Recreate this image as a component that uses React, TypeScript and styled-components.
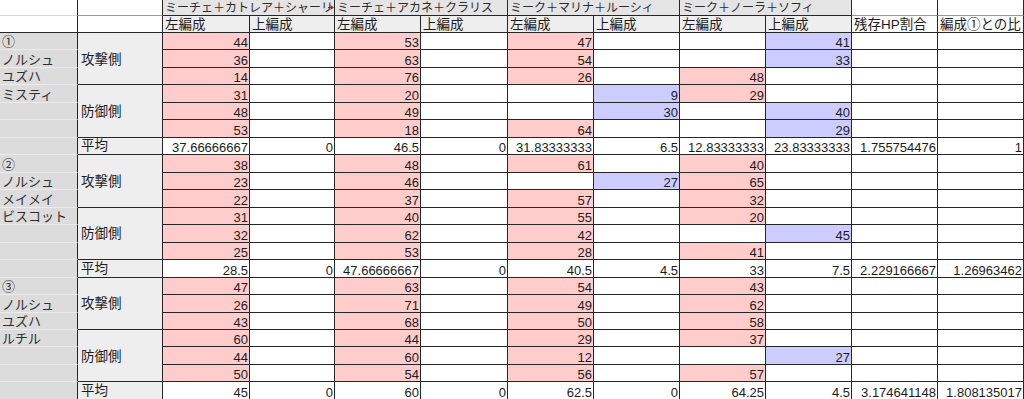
import React from 'react';
import styled, { createGlobalStyle, css } from 'styled-components';

const GlobalStyle = createGlobalStyle`
  html, body { margin: 0; padding: 0; background: #ffffff; overflow: hidden; }
  body { font-family: "Liberation Sans", "Noto Sans CJK JP", sans-serif; }
`;

const Sheet = styled.div`
  display: grid;
  grid-template-columns: 78px 85px 87px 85px 86px 87px 86px 86px 86px 86px 86px 86px;
  grid-template-rows: 16px 17px repeat(21, 17.47px);
  width: 1024px;
  height: 399px;
  overflow: hidden;
  font-family: "Liberation Sans", "Noto Sans CJK JP", sans-serif;
  color: #1c1c1c;
`;

const Cell = styled.div<{ $span?: number; $rows?: number }>`
  position: relative;
  box-sizing: border-box;
  min-width: 0;
  grid-column: span ${(p) => p.$span ?? 1};
  grid-row: span ${(p) => p.$rows ?? 1};
  border-right: 1px solid #262626;
  border-bottom: 1px solid #262626;
  display: flex;
  align-items: flex-end;
  padding: 0 2px;
  overflow: hidden;
  white-space: nowrap;
  font-size: 13px;
  line-height: 12px;
`;

const Corner = styled(Cell)<{ $top?: boolean }>`
  background: #ffffff;
  border-bottom-color: ${(p) => (p.$top ? '#d6d6d6' : '#262626')};
`;

const BlankHead = styled(Cell)<{ $top?: boolean }>`
  background: #ffffff;
  border-bottom-color: ${(p) => (p.$top ? '#9a9a9a' : '#262626')};
`;

const GroupHead = styled(Cell)`
  background: #e4e4e4;
  font-size: 12px;
  line-height: 12px;
  padding: 0 6px 1px 2px;
  color: #2a2a2a;
`;

const OverflowMark = styled.svg`
  position: absolute;
  right: 0;
  top: 5px;
  width: 6px;
  height: 5px;
`;

const SubHead = styled(Cell)<{ $plain?: boolean }>`
  background: ${(p) => (p.$plain ? '#ffffff' : '#eeeeee')};
  font-size: 13.5px;
  line-height: 13px;
  padding: 0 2px 1px 2px;
`;

const NameCell = styled(Cell)`
  background: #dcdcdc;
  border-bottom-color: #ececec;
  color: #2e2e2e;
  font-size: 13px;
  line-height: 13px;
  padding: 0 2px 1px 2px;
`;

const SideCell = styled(Cell)<{ $avg?: boolean }>`
  background: #eeeeee;
  font-size: 13.5px;
  line-height: 14px;
  padding: 0 3px 1px 3px;
  ${(p) =>
    p.$avg
      ? css`
          align-items: flex-end;
        `
      : css`
          align-items: center;
          padding-top: 3px;
        `}
`;

type Tone = 'p' | 'b' | 'w';

const toneBg: Record<Tone, string> = {
  p: '#ffcccc',
  b: '#ccccff',
  w: '#ffffff',
};

const NumCell = styled(Cell)<{ $tone: Tone }>`
  background: ${(p) => toneBg[p.$tone]};
  justify-content: flex-end;
  padding: 0 1px 0 2px;
`;

type Group = {
  names: string[];
  rows: string[][];
  avg: string[];
};

const groups: Group[] = [
  {
    names: ['①', 'ノルシュ', 'ユズハ', 'ミスティ', '', '', ''],
    rows: [
      ['44p', '', '53p', '', '47p', '', '', '41b'],
      ['36p', '', '63p', '', '54p', '', '', '33b'],
      ['14p', '', '76p', '', '26p', '', '48p', ''],
      ['31p', '', '20p', '', '', '9b', '29p', ''],
      ['48p', '', '49p', '', '', '30b', '', '40b'],
      ['53p', '', '18p', '', '64p', '', '', '29b'],
    ],
    avg: ['37.66666667', '0', '46.5', '0', '31.83333333', '6.5', '12.83333333', '23.83333333', '1.755754476', '1'],
  },
  {
    names: ['②', 'ノルシュ', 'メイメイ', 'ビスコット', '', '', ''],
    rows: [
      ['38p', '', '48p', '', '61p', '', '40p', ''],
      ['23p', '', '46p', '', '', '27b', '65p', ''],
      ['22p', '', '37p', '', '57p', '', '32p', ''],
      ['31p', '', '40p', '', '55p', '', '20p', ''],
      ['32p', '', '62p', '', '42p', '', '', '45b'],
      ['25p', '', '53p', '', '28p', '', '41p', ''],
    ],
    avg: ['28.5', '0', '47.66666667', '0', '40.5', '4.5', '33', '7.5', '2.229166667', '1.26963462'],
  },
  {
    names: ['③', 'ノルシュ', 'ユズハ', 'ルチル', '', '', ''],
    rows: [
      ['47p', '', '63p', '', '54p', '', '43p', ''],
      ['26p', '', '71p', '', '49p', '', '62p', ''],
      ['43p', '', '68p', '', '50p', '', '58p', ''],
      ['60p', '', '44p', '', '29p', '', '37p', ''],
      ['44p', '', '60p', '', '12p', '', '', '27b'],
      ['50p', '', '54p', '', '56p', '', '57p', ''],
    ],
    avg: ['45', '0', '60', '0', '62.5', '0', '64.25', '4.5', '3.174641148', '1.808135017'],
  },
];

const teams = [
  'ミーチェ＋カトレア＋シャーリィ',
  'ミーチェ＋アカネ＋クラリス',
  'ミーク＋マリナ＋ルーシィ',
  'ミーク＋ノーラ＋ソフィ',
];

function parse(v: string): { text: string; tone: Tone } {
  if (!v) return { text: '', tone: 'w' };
  const last = v[v.length - 1];
  if (last === 'p' || last === 'b') return { text: v.slice(0, -1), tone: last };
  return { text: v, tone: 'w' };
}

export default function App() {
  return (
    <>
      <GlobalStyle />
      <Sheet>
        <Corner $top />
        <BlankHead $top />
        {teams.map((t, i) => (
          <GroupHead key={t} $span={2}>
            {t}
            {i === 0 && (
              <OverflowMark viewBox="0 0 6 5">
                <path d="M0 2.5 H3" stroke="#b01010" strokeWidth="1" />
                <path d="M2.5 0 L6 2.5 L2.5 5 Z" fill="#c01818" />
              </OverflowMark>
            )}
          </GroupHead>
        ))}
        <BlankHead $top />
        <BlankHead $top />

        <Corner />
        <BlankHead />
        {teams.map((t) => (
          <React.Fragment key={t}>
            <SubHead>左編成</SubHead>
            <SubHead>上編成</SubHead>
          </React.Fragment>
        ))}
        <SubHead $plain>残存HP割合</SubHead>
        <SubHead $plain>編成①との比</SubHead>

        {groups.map((g, gi) =>
          g.names.map((name, r) => (
            <React.Fragment key={`${gi}-${r}`}>
              <NameCell>{name}</NameCell>
              {r === 0 && <SideCell $rows={3}>攻撃側</SideCell>}
              {r === 3 && <SideCell $rows={3}>防御側</SideCell>}
              {r === 6 && <SideCell $avg>平均</SideCell>}
              {r < 6
                ? [...g.rows[r], '', ''].map((v, c) => {
                    const { text, tone } = parse(v);
                    return (
                      <NumCell key={c} $tone={tone}>
                        {text}
                      </NumCell>
                    );
                  })
                : g.avg.map((v, c) => (
                    <NumCell key={c} $tone="w">
                      {v}
                    </NumCell>
                  ))}
            </React.Fragment>
          ))
        )}
      </Sheet>
    </>
  );
}
